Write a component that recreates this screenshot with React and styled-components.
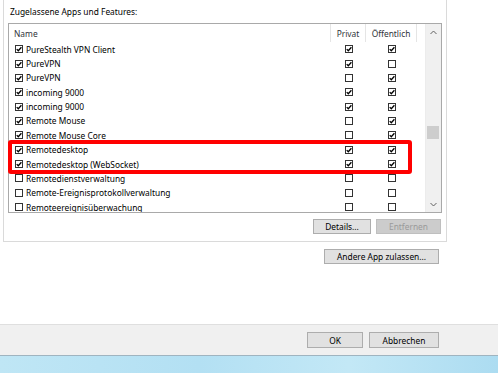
import React from "react";
import styled, { createGlobalStyle } from "styled-components";

const GlobalStyle = createGlobalStyle`
  html, body {
    margin: 0;
    padding: 0;
    background: #ffffff;
    overflow: hidden;
  }
  body {
    font-family: "Noto Sans", "Open Sans", sans-serif;
    font-size: 8.4px;
    color: #000;
  }
`;

const Window = styled.div`
  width: 498px;
  height: 373px;
  display: flex;
  flex-direction: column;
`;

const Content = styled.div`
  flex: 1;
  background: #fff;
  padding-left: 3px;
  display: flex;
  flex-direction: column;
`;

const Panel = styled.div`
  width: 434px;
  border: 1px solid #dadada;
  border-top: none;
  padding: 5px 4px 7px 4px;
  display: flex;
  flex-direction: column;
`;

const Caption = styled.div`
  padding-left: 2px;
  line-height: 14px;
  height: 14px;
  margin-bottom: 4px;
`;

const ListBox = styled.div`
  position: relative;
  height: 188px;
  border: 1px solid #a9a9a9;
  display: flex;
`;

const Table = styled.div`
  flex: 1;
  overflow: hidden;
  display: flex;
  flex-direction: column;
`;

const HeaderRow = styled.div`
  height: 18px;
  flex: none;
  display: grid;
  grid-template-columns: 321px 35px 52px;
  color: #30343a;
`;

const HeaderCell = styled.div`
  display: flex;
  align-items: center;
  justify-content: ${(p) => (p.$left ? "flex-start" : "center")};
  padding-left: ${(p) => (p.$left ? "5px" : "0")};
  border-left: ${(p) => (p.$sep ? "1px solid #e5e5e5" : "none")};
  border-right: ${(p) => (p.$end ? "1px solid #e5e5e5" : "none")};
`;

const Row = styled.div`
  height: 14.36px;
  flex: none;
  display: grid;
  grid-template-columns: 321px 35px 52px;
  align-items: center;
`;

const NameCell = styled.div`
  display: flex;
  align-items: center;
  gap: 3px;
  padding-left: 6px;
  white-space: nowrap;
`;

const CheckCell = styled.div`
  display: flex;
  justify-content: center;
  padding-left: ${(p) => p.$shift || 0}px;
`;

const Scrollbar = styled.div`
  width: 15px;
  flex: none;
  background: #f0f0f0;
  display: flex;
  flex-direction: column;
  align-items: center;
  border-left: 1px solid #ececec;
`;

const ArrowBox = styled.div`
  height: 16px;
  width: 15px;
  display: flex;
  align-items: center;
  justify-content: center;
  flex: none;
`;

const Track = styled.div`
  flex: 1;
  width: 100%;
  position: relative;
`;

const Thumb = styled.div`
  position: absolute;
  left: 1px;
  right: 2px;
  top: 86px;
  height: 13px;
  background: #cdcdcd;
`;

const Highlight = styled.div`
  position: absolute;
  left: -1px;
  top: 116px;
  width: 404px;
  height: 34px;
  box-sizing: border-box;
  border: 4px solid #ff0000;
  border-radius: 3px;
  pointer-events: none;
`;

const ButtonRow = styled.div`
  display: flex;
  justify-content: flex-end;
  gap: 5px;
  margin-top: 6px;
  padding-right: 1px;
`;

const Button = styled.div`
  box-sizing: border-box;
  width: ${(p) => p.$w}px;
  height: ${(p) => p.$h || 15}px;
  display: flex;
  align-items: center;
  justify-content: center;
  background: ${(p) => (p.$disabled ? "#cccccc" : "#e1e1e1")};
  border: 1px solid ${(p) => (p.$disabled ? "#bfbfbf" : "#adadad")};
  color: ${(p) => (p.$disabled ? "#9a9a9a" : "#000")};
  white-space: nowrap;
`;

const AddRow = styled.div`
  width: 436px;
  display: flex;
  justify-content: flex-end;
  margin-top: 7px;
`;

const Footer = styled.div`
  height: 31px;
  flex: none;
  background: #f0f0f0;
  border-top: 1px solid #dfdfdf;
  display: flex;
  justify-content: flex-end;
  align-items: flex-start;
  gap: 6px;
  padding: 7px 59px 0 0;
  box-sizing: border-box;
`;

const Desktop = styled.div`
  height: 17px;
  flex: none;
  border-top: 1px solid #9fb4c0;
  background: linear-gradient(90deg, #bfe6f5 0%, #b3e0f3 40%, #c3e8f6 70%, #acdcf1 100%);
`;

const Check = ({ on }) => (
  <svg width="8" height="8" viewBox="0 0 8 8" style={{ flex: "none" }}>
    <rect x="0.5" y="0.5" width="7" height="7" fill="#fff" stroke="#333" strokeWidth="1" />
    {on && (
      <path d="M1.7 4.1 L3.3 5.7 L6.4 2.2" fill="none" stroke="#000" strokeWidth="1.3" />
    )}
  </svg>
);

const rows = [
  ["PureStealth VPN Client", true, true, true],
  ["PureVPN", true, true, false],
  ["PureVPN", true, false, true],
  ["incoming 9000", true, true, true],
  ["incoming 9000", true, true, true],
  ["Remote Mouse", true, false, true],
  ["Remote Mouse Core", true, false, true],
  ["Remotedesktop", true, true, true],
  ["Remotedesktop (WebSocket)", true, true, true],
  ["Remotedienstverwaltung", false, false, false],
  ["Remote-Ereignisprotokollverwaltung", false, false, false],
  ["Remoteereignisüberwachung", false, false, false],
];

export default function App() {
  return (
    <>
      <GlobalStyle />
      <Window>
        <Content>
          <Panel>
            <Caption>Zugelassene Apps und Features:</Caption>
            <ListBox>
              <Table>
                <HeaderRow>
                  <HeaderCell $left>Name</HeaderCell>
                  <HeaderCell $sep>Privat</HeaderCell>
                  <HeaderCell $sep $end>Öffentlich</HeaderCell>
                </HeaderRow>
                {rows.map(([name, on, priv, pub], i) => (
                  <Row key={i}>
                    <NameCell>
                      <Check on={on} />
                      <span>{name}</span>
                    </NameCell>
                    <CheckCell $shift={2}>
                      <Check on={priv} />
                    </CheckCell>
                    <CheckCell $shift={2}>
                      <Check on={pub} />
                    </CheckCell>
                  </Row>
                ))}
              </Table>
              <Scrollbar>
                <ArrowBox>
                  <svg width="7" height="5" viewBox="0 0 7 5">
                    <path d="M0.5 4 L3.5 1 L6.5 4" fill="none" stroke="#606060" strokeWidth="1" />
                  </svg>
                </ArrowBox>
                <Track>
                  <Thumb />
                </Track>
                <ArrowBox>
                  <svg width="7" height="5" viewBox="0 0 7 5">
                    <path d="M0.5 1 L3.5 4 L6.5 1" fill="none" stroke="#606060" strokeWidth="1" />
                  </svg>
                </ArrowBox>
              </Scrollbar>
              <Highlight />
            </ListBox>
            <ButtonRow>
              <Button $w={58}>Details...</Button>
              <Button $w={65} $disabled>Entfernen</Button>
            </ButtonRow>
          </Panel>
          <AddRow>
            <Button $w={115}>Andere App zulassen...</Button>
          </AddRow>
        </Content>
        <Footer>
          <Button $w={56} $h={16}>OK</Button>
          <Button $w={70} $h={16}>Abbrechen</Button>
        </Footer>
        <Desktop />
      </Window>
    </>
  );
}
